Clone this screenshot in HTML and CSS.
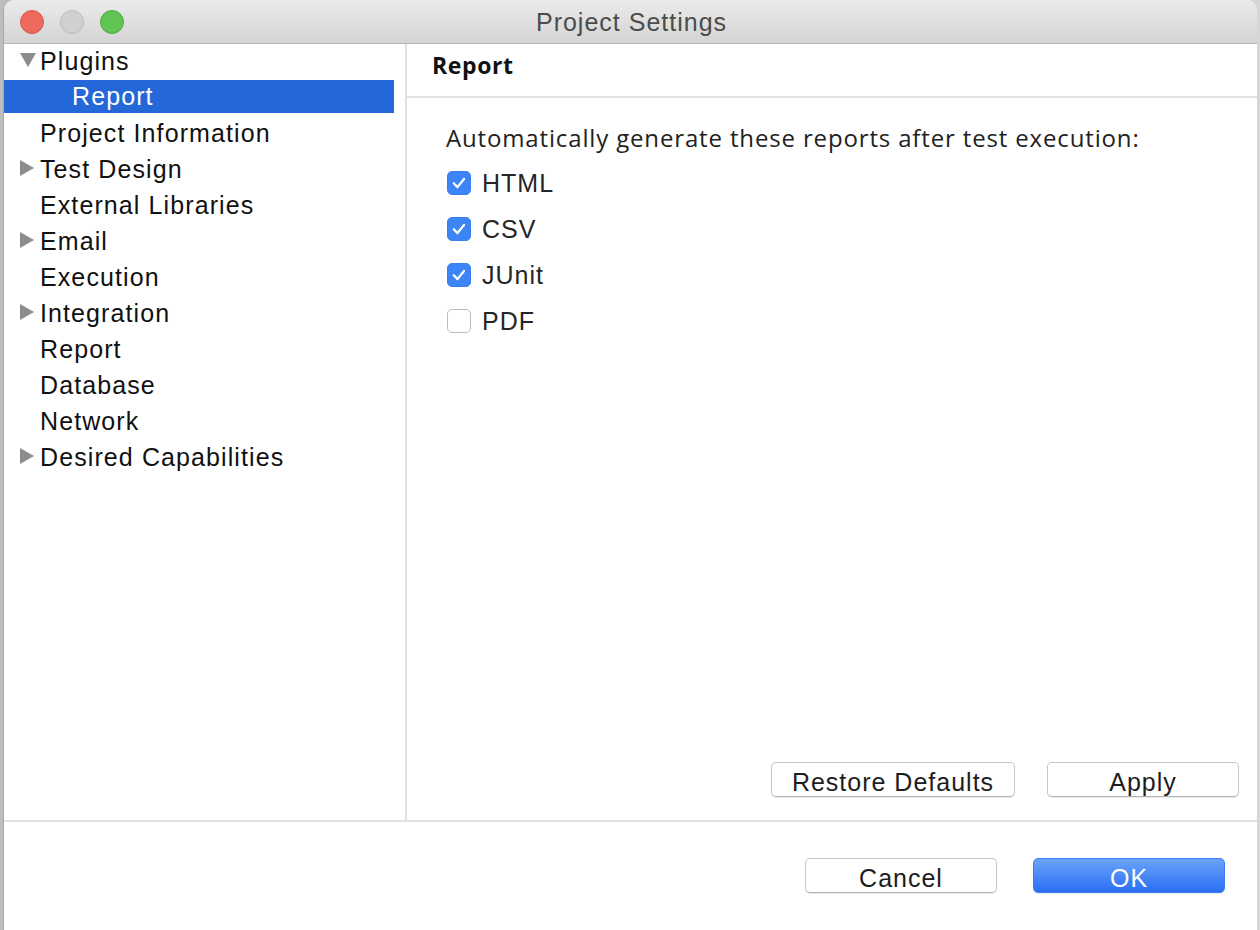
FILE: index.html
```html
<!DOCTYPE html>
<html>
<head>
<meta charset="utf-8">
<link rel="stylesheet" href="styles.css">
</head>
<body>
<div class="backdrop">
  <div class="window">
    <div class="titlebar">
      <div class="lights">
        <span class="light red"></span>
        <span class="light gray"></span>
        <span class="light green"></span>
      </div>
      <div class="title">Project Settings</div>
    </div>
    <div class="main">
      <div class="tree">
        <div class="row"><span class="tri down"></span><span class="label">Plugins</span></div>
        <div class="row sel"><span class="tri none"></span><span class="label sub">Report</span></div>
        <div class="row"><span class="tri none"></span><span class="label">Project Information</span></div>
        <div class="row"><span class="tri right"></span><span class="label">Test Design</span></div>
        <div class="row"><span class="tri none"></span><span class="label">External Libraries</span></div>
        <div class="row"><span class="tri right"></span><span class="label">Email</span></div>
        <div class="row"><span class="tri none"></span><span class="label">Execution</span></div>
        <div class="row"><span class="tri right"></span><span class="label">Integration</span></div>
        <div class="row"><span class="tri none"></span><span class="label">Report</span></div>
        <div class="row"><span class="tri none"></span><span class="label">Database</span></div>
        <div class="row"><span class="tri none"></span><span class="label">Network</span></div>
        <div class="row"><span class="tri right"></span><span class="label">Desired Capabilities</span></div>
      </div>
      <div class="panel">
        <div class="panel-head">Report</div>
        <div class="panel-body">
          <div class="intro">Automatically generate these reports after test execution:</div>
          <label class="check"><span class="box on"><svg viewBox="0 0 24 24"><path d="M6.3 12.3 L10.3 16.5 L17.5 7.6" fill="none" stroke="#fff" stroke-width="2.4" stroke-linecap="round" stroke-linejoin="round"/></svg></span>HTML</label>
          <label class="check"><span class="box on"><svg viewBox="0 0 24 24"><path d="M6.3 12.3 L10.3 16.5 L17.5 7.6" fill="none" stroke="#fff" stroke-width="2.4" stroke-linecap="round" stroke-linejoin="round"/></svg></span>CSV</label>
          <label class="check"><span class="box on"><svg viewBox="0 0 24 24"><path d="M6.3 12.3 L10.3 16.5 L17.5 7.6" fill="none" stroke="#fff" stroke-width="2.4" stroke-linecap="round" stroke-linejoin="round"/></svg></span>JUnit</label>
          <label class="check"><span class="box"></span>PDF</label>
        </div>
        <div class="panel-actions">
          <button class="btn restore">Restore Defaults</button>
          <button class="btn apply">Apply</button>
        </div>
      </div>
    </div>
    <div class="footer">
      <button class="btn cancel">Cancel</button>
      <button class="btn ok">OK</button>
    </div>
  </div>
</div>
</body>
</html>
```

FILE: styles.css
```css
html, body {
  margin: 0;
  padding: 0;
  width: 1260px;
  height: 930px;
  overflow: hidden;
}
body {
  font-family: "Liberation Sans", Arial, sans-serif;
  background: #c8c8c8;
}
.backdrop {
  width: 1260px;
  height: 930px;
  padding-left: 4px;
  box-sizing: border-box;
  background: linear-gradient(90deg, #bdbdbd, #d6d6d6);
}
.window {
  width: 1253px;
  height: 940px;
  background: #fff;
  border-radius: 10px 10px 0 0;
  display: flex;
  flex-direction: column;
  overflow: hidden;
  box-shadow: -1px 0 0 #a9a9a9;
}
.titlebar {
  height: 43px;
  flex: none;
  background: linear-gradient(#ebebeb, #d4d4d4);
  border-bottom: 1px solid #b6b6b6;
  display: flex;
  align-items: center;
  position: relative;
}
.lights {
  display: flex;
  gap: 16px;
  padding-left: 16px;
}
.light {
  width: 24px;
  height: 24px;
  border-radius: 50%;
  box-sizing: border-box;
}
.light.red { background: #ee6a5f; border: 1px solid #d9574d; }
.light.gray { background: #d0d0d0; border: 1px solid #bdbdbd; }
.light.green { background: #5fc454; border: 1px solid #4aa93f; }
.title {
  position: absolute;
  left: 0;
  right: 0;
  top: 2px;
  bottom: 0;
  display: flex;
  align-items: center;
  justify-content: center;
  font-size: 25px;
  letter-spacing: 1px;
  color: #4c4c4c;
  padding-left: 2px;
}
.main {
  display: flex;
  height: 776px;
  flex: none;
  border-bottom: 2px solid #e2e2e2;
}
.tree {
  width: 401px;
  flex: none;
  border-right: 2px solid #e1e1e1;
  margin-top: -1px;
}
.row {
  height: 36px;
  display: flex;
  align-items: center;
  font-size: 25px;
  letter-spacing: 1.1px;
  color: #111;
  width: 390px;
}
.row.sel {
  background: #2467d9;
  color: #fff;
  height: 33px;
  margin: 1px 0 2px;
}
.tri {
  width: 36px;
  flex: none;
  display: flex;
  justify-content: flex-start;
  padding-left: 16px;
  box-sizing: border-box;
}
.tri.right::before {
  content: "";
  border-left: 14px solid #8b8b8b;
  border-top: 8px solid transparent;
  border-bottom: 8px solid transparent;
  margin-top: -2px;
}
.tri.down::before {
  content: "";
  border-top: 14px solid #8b8b8b;
  border-left: 8px solid transparent;
  border-right: 8px solid transparent;
  margin-top: -2px;
}
.label.sub {
  padding-left: 32px;
}
.panel {
  flex: 1;
  display: flex;
  flex-direction: column;
}
.panel-head {
  height: 54px;
  flex: none;
  border-bottom: 2px solid #e4e4e4;
  font-family: "Open Sans", "Noto Sans", sans-serif;
  font-weight: bold;
  font-size: 23px;
  letter-spacing: 0.6px;
  color: #111;
  padding-left: 25px;
  line-height: 42px;
  box-sizing: border-box;
}
.panel-body {
  flex: 1;
  padding: 20px 0 0 39px;
}
.intro {
  font-family: "Open Sans", "Noto Sans", sans-serif;
  font-size: 24px;
  letter-spacing: 0.85px;
  color: #222;
  height: 42px;
  line-height: 40px;
}
.check {
  display: flex;
  align-items: center;
  height: 46px;
  font-size: 25px;
  letter-spacing: 1px;
  color: #262626;
  gap: 11px;
}
.box {
  width: 24px;
  height: 24px;
  border-radius: 5px;
  box-sizing: border-box;
  border: 1px solid #bdbdbd;
  background: #fff;
  flex: none;
  margin-left: 1px;
  display: flex;
}
.box.on {
  background: #3d84f7;
  border-color: #3a7ff2;
}
.box svg {
  width: 22px;
  height: 22px;
}
.panel-actions {
  display: flex;
  justify-content: flex-end;
  gap: 32px;
  padding: 0 18px 23px 0;
}
.btn {
  font-family: "Liberation Sans", Arial, sans-serif;
  font-size: 25px;
  letter-spacing: 1px;
  color: #1d1d1d;
  background: #fff;
  border: 1px solid #c6c6c6;
  border-bottom-color: #b0b0b0;
  border-radius: 5px;
  height: 35px;
  padding: 0;
  box-shadow: 0 1px 1px rgba(0,0,0,0.08);
  line-height: 33px;
  padding-top: 3px;
}
.restore { width: 244px; }
.apply { width: 192px; }
.footer {
  display: flex;
  justify-content: flex-end;
  gap: 36px;
  padding: 36px 32px 0 0;
}
.cancel { width: 192px; }
.ok {
  width: 192px;
  color: #fff;
  border: 1px solid #3b7ef5;
  background: linear-gradient(#6ba3f8, #2a6ef5);
}
```
